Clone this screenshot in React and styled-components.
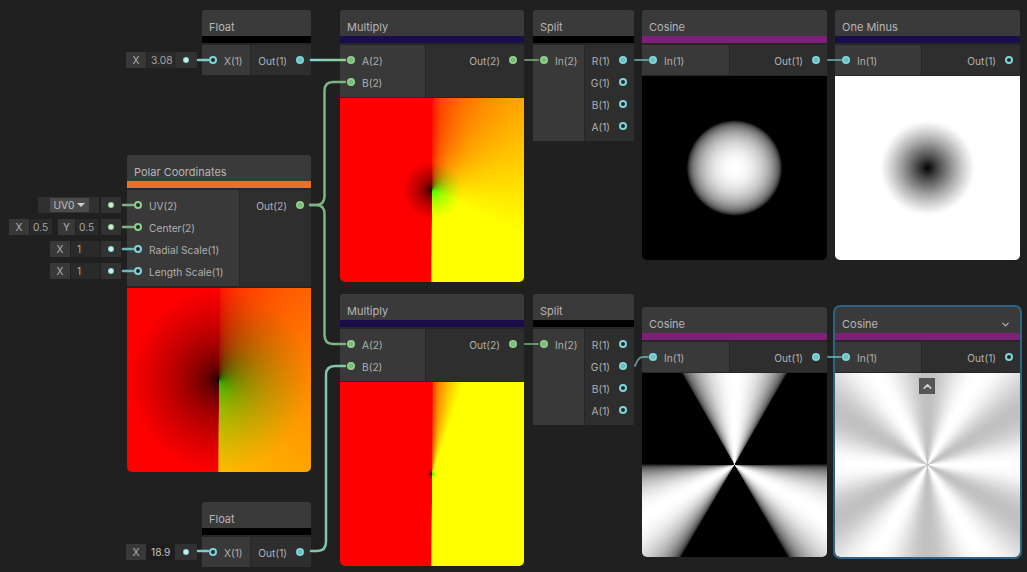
import React from "react";
import styled, { createGlobalStyle } from "styled-components";
import { ChevronDown, ChevronUp } from "lucide-react";

const FLOAT = "#7fd6da";
const VEC2 = "#8fd08a";

const STRIP_BLACK = "#000000";
const STRIP_MATH = "#1b0c4a";
const STRIP_COS = "#7e1f78";
const STRIP_UV = "#e8702a";

// preview shaders: values are linear, the graph shows them in sRGB
const enc = (v) => Math.round(255 * Math.pow(Math.min(1, Math.max(0, v)), 1 / 2.2));
const tint = (v, ch) => {
  const c = enc(v);
  if (ch === "r") return `rgb(${c},0,0)`;
  if (ch === "g") return `rgb(0,${c},0)`;
  return `rgb(${c},${c},${c})`;
};

const radial = (fn, ch) => {
  const stops = [];
  for (let t = 0; t <= 150; t += 2) stops.push(`${tint(fn((t / 100) * 0.5), ch)} ${t}%`);
  return `radial-gradient(circle closest-side at 50% 50%, ${stops.join(",")})`;
};

const conic = (fn, ch) => {
  const stops = [];
  for (let deg = 0; deg <= 360; deg += 1) {
    const turn = deg <= 180 ? deg / 360 : deg / 360 - 1;
    stops.push(`${tint(fn(turn), ch)} ${deg}deg`);
  }
  return `conic-gradient(from 0deg at 50% 50%, ${stops.join(",")})`;
};

const polarMix = (k) => `${conic((a) => a * k, "g")}, ${radial((d) => 2 * d * k, "r")}`;

const PREVIEWS = {
  polar: polarMix(1),
  mulTop: polarMix(3.08),
  mulBottom: polarMix(18.9),
  cosRadial: radial((d) => Math.cos(6.16 * d), "w"),
  oneMinus: radial((d) => 1 - Math.cos(6.16 * d), "w"),
  cosAngle: conic((a) => Math.cos(18.9 * a), "w"),
  cosCos: conic((a) => Math.cos(Math.cos(18.9 * a)), "w"),
};

const GlobalStyle = createGlobalStyle`
  html, body {
    margin: 0;
    padding: 0;
    background: #202020;
  }
`;

const Canvas = styled.div`
  position: relative;
  width: 1027px;
  height: 572px;
  overflow: hidden;
  background: #202020;
  font-family: Inter, "Liberation Sans", sans-serif;
  font-size: 10.2px;
  color: #b0b0b0;
`;

const NodeBox = styled.div`
  position: absolute;
  left: ${(p) => p.$x}px;
  top: ${(p) => p.$y}px;
  width: ${(p) => p.$w}px;
  display: flex;
  flex-direction: column;
  background: #262626;
  border-radius: 3px 3px 5px 5px;

  ${(p) =>
    p.$selected &&
    `
    &::after {
      content: "";
      position: absolute;
      inset: -2px;
      border: 2px solid #2b6583;
      border-radius: 7px;
      pointer-events: none;
    }
  `}
`;

const Title = styled.div`
  display: flex;
  align-items: center;
  justify-content: space-between;
  height: 18px;
  padding: 8px 7px 0;
  background: #3a3a3a;
  border-radius: 3px 3px 0 0;
  font-size: 11px;
  color: #b6b6b6;
  svg {
    margin-right: 2px;
  }
`;

const Strip = styled.div`
  height: 7px;
  background: ${(p) => p.$color};
`;

const Ports = styled.div`
  display: flex;
  margin-top: 2px;
  gap: 1px;
`;

const InputCol = styled.div`
  width: ${(p) => p.$w}px;
  flex: none;
  padding: 4px 0;
  background: #393939;
`;

const OutputCol = styled.div`
  flex: 1;
  padding: 4px 0;
  background: #2e2e2e;
`;

const InputRow = styled.div`
  position: relative;
  display: flex;
  align-items: center;
  gap: 7px;
  height: 22px;
  padding-left: 7px;
`;

const OutputRow = styled.div`
  display: flex;
  align-items: center;
  justify-content: flex-end;
  gap: 9px;
  height: 22px;
  padding-right: 7px;
`;

const Label = styled.span`
  padding-top: 2px;
  white-space: nowrap;
`;

const Dot = styled.span`
  flex: none;
  box-sizing: border-box;
  width: 8px;
  height: 8px;
  border-radius: 50%;
  border: 2px solid ${(p) => p.$color};
  background: ${(p) => (p.$on ? p.$color : "#23282a")};
  box-shadow: ${(p) => (p.$on ? "inset 0 0 0 1px rgba(40,60,60,.35)" : "none")};
`;

const Preview = styled.div`
  margin-top: ${(p) => p.$gap || 1}px;
  width: 100%;
  height: 184px;
  border-radius: 0 0 5px 5px;
  background-image: ${(p) => p.$image};
  background-blend-mode: screen;
`;

const CollapseButton = styled.div`
  position: absolute;
  left: 84px;
  top: 71px;
  display: flex;
  align-items: center;
  justify-content: center;
  width: 16px;
  height: 16px;
  background: #555555;
  color: #d4d4d4;
`;

const Field = styled.div`
  position: absolute;
  top: 50%;
  right: calc(100% + ${(p) => p.$offset || 6}px);
  transform: translateY(-50%);
  display: flex;
  align-items: stretch;
  gap: 1px;
  height: 16px;
  line-height: 16px;
`;

const FieldLetter = styled.span`
  width: ${(p) => p.$w || 20}px;
  margin-left: ${(p) => p.$ml || 0}px;
  text-align: center;
  background: #383838;
`;

const FieldValue = styled.span`
  width: ${(p) => p.$w}px;
  padding-left: ${(p) => p.$pad ?? 3}px;
  box-sizing: border-box;
  background: ${(p) => (p.$sunk ? "#1d1d1d" : "#2a2a2a")};
  color: ${(p) => (p.$sunk ? "#c4c4c4" : "#a6a6a6")};
`;

const Knob = styled.span`
  display: flex;
  align-items: center;
  justify-content: center;
  width: ${(p) => p.$w || 20}px;
  margin-left: ${(p) => p.$ml || 0}px;
  background: #323232;
  &::before {
    content: "";
    width: 4px;
    height: 4px;
    border-radius: 50%;
    background: #d6ece6;
    box-shadow: 0 0 0 1px ${(p) => p.$color};
  }
`;

const ChannelBox = styled.span`
  display: flex;
  align-items: center;
  padding: 0 0 0 12px;
  width: 61px;
  box-sizing: border-box;
  background: #303030;
`;

const ChannelSelect = styled.span`
  display: flex;
  align-items: center;
  justify-content: center;
  gap: 3px;
  width: 39px;
  height: 14px;
  background: #4b4b4b;
  color: #c0c0c0;
  &::after {
    content: "";
    border-left: 4px solid transparent;
    border-right: 4px solid transparent;
    border-top: 4px solid #cfcfcf;
  }
`;

const WireLayer = styled.svg`
  position: absolute;
  top: 0;
  left: 0;
  width: 100%;
  height: 100%;
  pointer-events: none;
  fill: none;
`;

function Node({ x, y, w, title, strip, leftW, inputs, outputs, image, gap, selected, children, menu }) {
  return (
    <NodeBox $x={x} $y={y} $w={w} $selected={selected}>
      <Title>
        {title}
        {menu && <ChevronDown size={11} strokeWidth={3} color="#b0b0b0" />}
      </Title>
      <Strip $color={strip} />
      <Ports>
        <InputCol $w={leftW}>
          {inputs.map((p) => (
            <InputRow key={p.name}>
              {p.field}
              <Dot $color={p.color} $on={p.on} />
              <Label>{p.name}</Label>
            </InputRow>
          ))}
        </InputCol>
        <OutputCol>
          {outputs.map((p) => (
            <OutputRow key={p.name}>
              <Label>{p.name}</Label>
              <Dot $color={p.color} $on={p.on} />
            </OutputRow>
          ))}
        </OutputCol>
      </Ports>
      {image && <Preview $image={image} $gap={gap} />}
      {children}
    </NodeBox>
  );
}

function FloatField({ value, sunk }) {
  return (
    <Field $offset={5}>
      <FieldLetter>X</FieldLetter>
      <FieldValue $w={27} $pad={4} $sunk={sunk}>{value}</FieldValue>
      <Knob $w={22} $color={FLOAT} />
    </Field>
  );
}

function ScaleField() {
  return (
    <Field>
      <FieldLetter>X</FieldLetter>
      <FieldValue $w={29} $pad={6}>1</FieldValue>
      <Knob $color={FLOAT} />
    </Field>
  );
}

const polarInputs = [
  {
    name: "UV(2)",
    color: VEC2,
    field: (
      <Field>
        <ChannelBox>
          <ChannelSelect>UV0</ChannelSelect>
        </ChannelBox>
        <Knob $w={20} $ml={1} $color={VEC2} />
      </Field>
    ),
  },
  {
    name: "Center(2)",
    color: VEC2,
    field: (
      <Field>
        <FieldLetter>X</FieldLetter>
        <FieldValue $w={22}>0.5</FieldValue>
        <FieldLetter $w={17} $ml={5}>Y</FieldLetter>
        <FieldValue $w={22}>0.5</FieldValue>
        <Knob $ml={2} $color={VEC2} />
      </Field>
    ),
  },
  { name: "Radial Scale(1)", color: FLOAT, field: <ScaleField /> },
  { name: "Length Scale(1)", color: FLOAT, field: <ScaleField /> },
];

function splitOutputs(active) {
  return ["R(1)", "G(1)", "B(1)", "A(1)"].map((name) => ({
    name,
    color: FLOAT,
    on: name === active,
  }));
}

function Wires() {
  return (
    <WireLayer viewBox="0 0 1027 572">
      <defs>
        <linearGradient id="floatToVec" gradientUnits="userSpaceOnUse" x1="311" y1="0" x2="345" y2="0">
          <stop offset="0" stopColor={FLOAT} />
          <stop offset="1" stopColor={VEC2} />
        </linearGradient>
      </defs>
      <g strokeWidth="2.5" strokeLinecap="round">
        <path d="M311 60H345" stroke="url(#floatToVec)" />
        <path d="M311 551H317Q326 551 326 542V375Q326 366 335 366H345" stroke="#7fc9a8" />
        <path d="M310 205H316Q324.5 205 324.5 196V91Q324.5 82 333 82H345" stroke="#7cb583" />
        <path d="M310 205H316Q324.5 205 324.5 214V335Q324.5 344 333 344H345" stroke="#7cb583" />
        <path d="M198 60H208" stroke="#7fcbc8" />
        <path d="M198 551H208" stroke="#7fcbc8" />
        <path d="M123 205H133" stroke="#7cb583" />
        <path d="M123 227H133" stroke="#7cb583" />
        <path d="M123 249H133" stroke="#6fb8bb" />
        <path d="M123 271H133" stroke="#6fb8bb" />
      </g>
      <g strokeWidth="2" strokeLinecap="round" opacity="0.75">
        <path d="M525 60H538" stroke="#7cb583" />
        <path d="M525 344H538" stroke="#7cb583" />
        <path d="M635 60H648" stroke="#6fb8bb" />
        <path d="M635 366Q638 357 643 357H648" stroke="#6fb8bb" />
        <path d="M828 60H841" stroke="#6fb8bb" />
        <path d="M828 357H841" stroke="#6fb8bb" />
      </g>
    </WireLayer>
  );
}

export default function App() {
  return (
    <Canvas>
      <GlobalStyle />
      <Node
        x={202} y={10} w={109} title="Float" strip={STRIP_BLACK} leftW={48}
        inputs={[{ name: "X(1)", color: FLOAT, field: <FloatField value="3.08" /> }]}
        outputs={[{ name: "Out(1)", color: FLOAT, on: true }]}
      />
      <Node
        x={127} y={155} w={184} title="Polar Coordinates" strip={STRIP_UV} leftW={112}
        inputs={polarInputs}
        outputs={[{ name: "Out(2)", color: VEC2, on: true }]}
        image={PREVIEWS.polar} gap={2}
      />
      <Node
        x={202} y={502} w={109} title="Float" strip={STRIP_BLACK} leftW={48}
        inputs={[{ name: "X(1)", color: FLOAT, field: <FloatField value="18.9" sunk /> }]}
        outputs={[{ name: "Out(1)", color: FLOAT, on: true }]}
      />
      <Node
        x={340} y={10} w={184} title="Multiply" strip={STRIP_MATH} leftW={85}
        inputs={[{ name: "A(2)", color: VEC2, on: true }, { name: "B(2)", color: VEC2, on: true }]}
        outputs={[{ name: "Out(2)", color: VEC2, on: true }]}
        image={PREVIEWS.mulTop}
      />
      <Node
        x={340} y={294} w={184} title="Multiply" strip={STRIP_MATH} leftW={85}
        inputs={[{ name: "A(2)", color: VEC2, on: true }, { name: "B(2)", color: VEC2, on: true }]}
        outputs={[{ name: "Out(2)", color: VEC2, on: true }]}
        image={PREVIEWS.mulBottom}
      />
      <Node
        x={533} y={10} w={101} title="Split" strip={STRIP_BLACK} leftW={51}
        inputs={[{ name: "In(2)", color: VEC2, on: true }]}
        outputs={splitOutputs("R(1)")}
      />
      <Node
        x={533} y={294} w={101} title="Split" strip={STRIP_BLACK} leftW={51}
        inputs={[{ name: "In(2)", color: VEC2, on: true }]}
        outputs={splitOutputs("G(1)")}
      />
      <Node
        x={642} y={10} w={185} title="Cosine" strip={STRIP_COS} leftW={87}
        inputs={[{ name: "In(1)", color: FLOAT, on: true }]}
        outputs={[{ name: "Out(1)", color: FLOAT, on: true }]}
        image={PREVIEWS.cosRadial}
      />
      <Node
        x={835} y={10} w={185} title="One Minus" strip={STRIP_MATH} leftW={86}
        inputs={[{ name: "In(1)", color: FLOAT, on: true }]}
        outputs={[{ name: "Out(1)", color: FLOAT }]}
        image={PREVIEWS.oneMinus}
      />
      <Node
        x={642} y={307} w={185} title="Cosine" strip={STRIP_COS} leftW={87}
        inputs={[{ name: "In(1)", color: FLOAT, on: true }]}
        outputs={[{ name: "Out(1)", color: FLOAT, on: true }]}
        image={PREVIEWS.cosAngle}
      />
      <Node
        x={835} y={307} w={185} title="Cosine" strip={STRIP_COS} leftW={86} selected menu
        inputs={[{ name: "In(1)", color: FLOAT, on: true }]}
        outputs={[{ name: "Out(1)", color: FLOAT }]}
        image={PREVIEWS.cosCos}
      >
        <CollapseButton>
          <ChevronUp size={13} strokeWidth={3} />
        </CollapseButton>
      </Node>
      <Wires />
    </Canvas>
  );
}
